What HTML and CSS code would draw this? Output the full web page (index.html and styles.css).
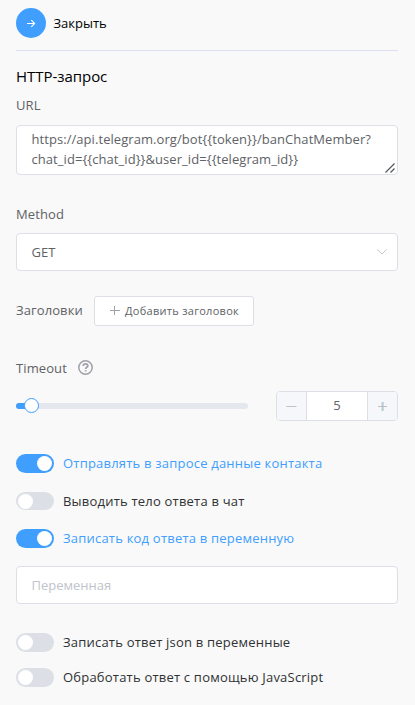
FILE: index.html
```html
<!DOCTYPE html>
<html lang="ru">
<head>
<meta charset="utf-8">
<title>HTTP-запрос</title>
<link rel="stylesheet" href="styles.css">
</head>
<body>
<main class="panel">
  <header class="header">
    <button class="close" aria-label="Закрыть"><svg width="10" height="10" viewBox="0 0 10 10"><path d="M1 5.5H8.6M5.3 2.2L8.6 5.5L5.3 8.8"/></svg></button>
    <span class="close-label">Закрыть</span>
  </header>
  <h1 class="title">HTTP-запрос</h1>
  <label class="label url-label">URL</label>
  <div class="textarea">
    <div class="line">https://api.telegram.org/bot{{token}}/banChatMember?</div>
    <div class="line">chat_id={{chat_id}}&amp;user_id={{telegram_id}}</div>
    <svg class="grip" width="10" height="10" viewBox="0 0 10 10"><path d="M.5 9.5L9.5 .5M5.5 9.5L9.5 5.5"/></svg>
  </div>
  <label class="label method-label">Method</label>
  <div class="field select"><span>GET</span><svg width="10" height="6" viewBox="0 0 10 6"><path d="M.3 .4L5 5.1L9.7 .4"/></svg></div>
  <div class="headers">
    <span class="label">Заголовки</span>
    <button class="add"><svg width="10" height="10" viewBox="0 0 10 10"><path d="M0 4.5H10M4.5 0V9"/></svg><span>Добавить заголовок</span></button>
  </div>
  <div class="timeout">
    <span class="label">Timeout</span>
    <svg width="15" height="15" viewBox="0 0 15 15"><circle cx="7.5" cy="7.5" r="6.7"/><path class="mark" d="M5.2 6C5.2 4.6 6.1 3.8 7.5 3.8S9.8 4.6 9.8 5.8C9.8 7.3 7.6 7.2 7.6 9M7.6 10.2V11.6"/></svg>
  </div>
  <div class="range-row">
    <div class="slider"><div class="fill"></div><div class="handle"></div></div>
    <div class="stepper">
      <span class="step minus"><svg width="11" height="11" viewBox="0 0 11 11"><path d="M.5 5.5H10.5"/></svg></span>
      <span class="value">5</span>
      <span class="step plus"><svg width="11" height="11" viewBox="0 0 11 11"><path d="M1 5.5H10"/><path class="left-edge" d="M5 1V10"/><path class="right-edge" d="M6 1V10"/></svg></span>
    </div>
  </div>
  <div class="toggle on contact"><i class="switch"></i><span>Отправлять в запросе данные контакта</span></div>
  <div class="toggle body"><i class="switch"></i><span>Выводить тело ответа в чат</span></div>
  <div class="toggle on code"><i class="switch"></i><span>Записать код ответа в переменную</span></div>
  <div class="field variable">Переменная</div>
  <div class="toggle json"><i class="switch"></i><span>Записать ответ json в переменные</span></div>
  <div class="toggle script"><i class="switch"></i><span>Обработать ответ с помощью JavaScript</span></div>
</main>
</body>
</html>
```
FILE: styles.css
```css
* { box-sizing: border-box; }
body { margin: 0; background: #f9f9f9; color: #606266; font: 13px/20px "Open Sans", "Noto Sans", sans-serif; }
button { font: inherit; padding: 0; margin: 0; }
svg { display: block; fill: none; flex: none; }
.panel { width: 415px; height: 705px; padding: 8px 17px 0 16px; overflow: hidden; white-space: nowrap; }
.header { display: flex; align-items: center; height: 43px; padding-bottom: 12px; border-bottom: 1px solid #dcdff0; color: #000; }
.close { display: flex; align-items: center; justify-content: center; width: 30px; height: 30px; border: 0; border-radius: 50%; background: #409eff; }
.close svg { stroke: #fff; stroke-width: 1.1; }
.close-label { margin-left: 7.5px; }
.title { margin: 15px 0 0; height: 20px; font-size: 15px; line-height: 20px; font-weight: 400; letter-spacing: -.04px; color: #000; }
.label { display: block; height: 20px; font-size: 13px; letter-spacing: .1px; }
.url-label { margin-top: 9px; }
.textarea { position: relative; height: 50px; margin-top: 10px; padding: 3px 14.5px; border: 1px solid #dcdfe6; border-radius: 4px; background: #fff; letter-spacing: .06px; }
.line { height: 20px; }
.grip { position: absolute; right: 2px; bottom: 1px; stroke: #55565a; stroke-width: 1.2; }
.method-label { margin-top: 29px; }
.field { display: flex; align-items: center; height: 38px; padding: 0 14.5px; border: 1px solid #dcdfe6; border-radius: 4px; background: #fff; }
.select { justify-content: space-between; margin-top: 9px; padding-right: 10px; }
.select svg { stroke: #c0c4cc; }
.headers { display: flex; align-items: center; height: 30px; margin-top: 25px; }
.headers .label { width: 78px; height: 22px; }
.add { display: flex; align-items: center; width: 160px; height: 30px; padding-left: 15px; border: 1px solid #dcdfe6; border-radius: 3px; background: #fff; color: #606266; font-size: 11px; letter-spacing: .28px; }
.add svg { stroke: #a1a2a7; }
.add span { margin-left: 5px; }
.timeout { display: flex; align-items: center; height: 20px; margin-top: 32px; }
.timeout .label { width: 62px; }
.timeout svg { margin-bottom: 1px; stroke: #a0a1a8; stroke-width: 1.5; }
.timeout .mark { stroke-width: 1.8; }
.range-row { display: flex; align-items: center; justify-content: space-between; height: 30px; margin-top: 13px; }
.slider { position: relative; width: 232px; height: 6px; border-radius: 3px; background: #e4e7ed; }
.fill { width: 15px; height: 6px; border-radius: 3px 0 0 3px; background: #409eff; }
.handle { position: absolute; left: 8px; top: -5px; width: 15px; height: 15px; border: 1px solid #409eff; border-radius: 50%; background: #fff; }
.stepper { display: flex; width: 122px; height: 30px; border: 1px solid #dcdfe6; border-radius: 4px; background: #fff; overflow: hidden; }
.step { display: flex; align-items: center; justify-content: center; width: 30px; background: #f5f7fa; }
.step svg { stroke: #c0c1c5; }
.step .left-edge { stroke: #e5bd9c; }
.step .right-edge { stroke: #8cc0e6; }
.minus { border-right: 1px solid #dcdfe6; }
.plus { border-left: 1px solid #dcdfe6; }
.value { flex: 1; line-height: 27px; text-align: center; }
.toggle { display: flex; align-items: center; height: 19px; color: #303133; }
.toggle span { height: 22px; margin-left: 9px; letter-spacing: .21px; }
.switch { display: flex; align-items: center; width: 38px; height: 19px; padding: 0 2px; border-radius: 10px; background: #dcdfe6; }
.switch::before { content: ""; width: 15px; height: 15px; border-radius: 50%; background: #fff; }
.on { color: #409eff; }
.on .switch { justify-content: flex-end; background: #409eff; }
.contact { margin-top: 33px; }
.body { margin-top: 19px; height: 18px; }
.body .switch { height: 18px; }
.body span { height: 20px; }
.code { margin-top: 19px; }
.variable { margin-top: 18px; color: #c0c4cc; }
.json { margin-top: 29px; }
.script { margin-top: 16px; }
```
